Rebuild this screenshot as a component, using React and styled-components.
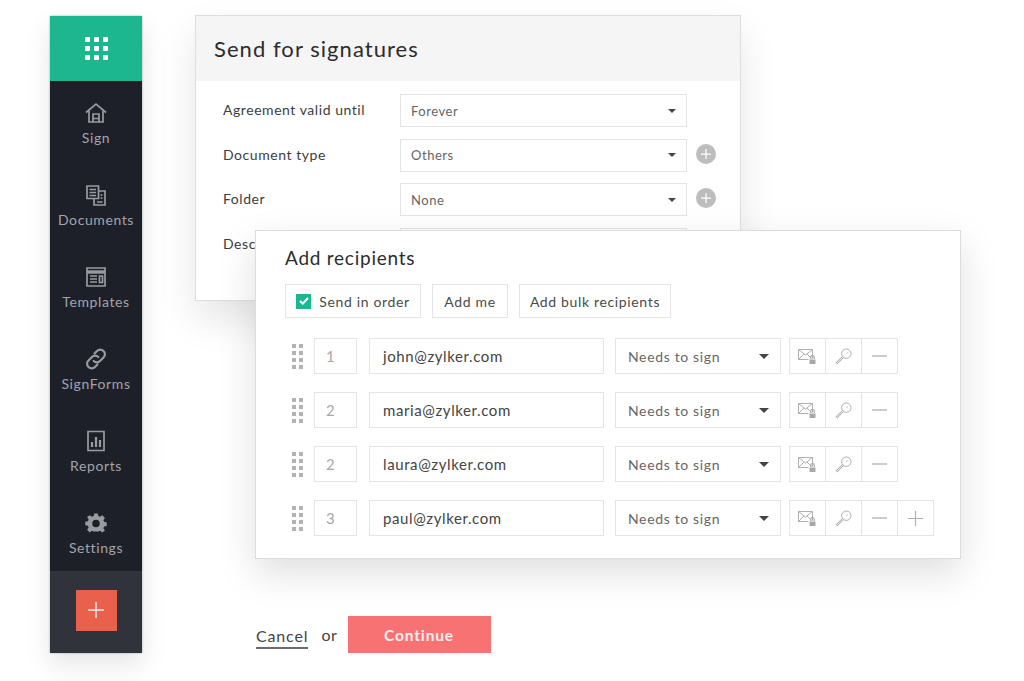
import React from "react";
import styled, { createGlobalStyle } from "styled-components";

const GlobalStyle = createGlobalStyle`
  html, body {
    margin: 0;
    background: #fff;
    font-family: "Lato", "Open Sans", sans-serif;
    overflow: hidden;
  }
`;

const Page = styled.div`
  display: flex;
  align-items: flex-start;
  width: 1024px;
  height: 681px;
  padding: 15px 0 0 50px;
  box-sizing: border-box;
`;

const Sidebar = styled.nav`
  display: flex;
  flex-direction: column;
  flex: none;
  width: 92px;
  height: 637px;
  margin-top: 1px;
  background: #1e2029;
  box-shadow: 0 0 2px #a9aaab, 0 12px 26px rgba(0, 0, 0, 0.1);
`;

const Brand = styled.div`
  display: flex;
  align-items: center;
  justify-content: center;
  flex: none;
  height: 65px;
  background: #1cb78f;
`;

const Dots = styled.div`
  display: grid;
  grid-template-columns: repeat(3, 5px);
  grid-auto-rows: 5px;
  gap: 4px;
  span {
    background: #fff;
    border-radius: 1px;
  }
`;

const NavList = styled.div`
  display: flex;
  flex-direction: column;
  flex: 1;
  gap: 37px;
  padding-top: 20px;
`;

const NavItem = styled.a`
  display: flex;
  flex-direction: column;
  align-items: center;
  color: #a3a4a9;
  font-size: 14px;
  line-height: 17px;
  letter-spacing: 0.6px;
  svg {
    width: 24px;
    height: 24px;
    margin-bottom: 4px;
  }
`;

const AddPanel = styled.div`
  display: flex;
  align-items: center;
  justify-content: center;
  flex: none;
  box-sizing: border-box;
  height: 82px;
  padding-bottom: 4px;
  background: #30343a;
`;

const AddButton = styled.button`
  display: flex;
  align-items: center;
  justify-content: center;
  width: 41px;
  height: 41px;
  padding: 0;
  border: 0;
  background: #e9604c;
`;

const Main = styled.main`
  display: flex;
  flex-direction: column;
  margin-left: 53px;
`;

const SignCard = styled.section`
  width: 544px;
  height: 284px;
  background: #fff;
  border: 1px solid #dedede;
  box-shadow: 0 18px 36px rgba(0, 0, 0, 0.1);
`;

const SignHeader = styled.h1`
  margin: 0;
  height: 65px;
  padding-left: 18px;
  background: #f5f5f5;
  font-size: 22px;
  font-weight: 400;
  line-height: 65px;
  letter-spacing: 1.05px;
  color: #2c2c2c;
`;

const FieldList = styled.div`
  display: flex;
  flex-direction: column;
  gap: 11.5px;
  padding: 13px 0 0 27px;
`;

const Field = styled.div`
  display: flex;
  align-items: center;
  height: 33px;
`;

const FieldLabel = styled.label`
  width: 177px;
  margin-top: -2px;
  font-size: 14px;
  letter-spacing: 0.55px;
  color: #3d3d3d;
`;

const Select = styled.div`
  display: flex;
  align-items: center;
  justify-content: space-between;
  box-sizing: border-box;
  width: ${(p) => p.$width}px;
  height: ${(p) => p.$height}px;
  padding: 0 ${(p) => p.$caretGap}px 0 ${(p) => p.$pad}px;
  flex: none;
  border: 1px solid #e4e4e4;
  background: #fff;
  font-size: ${(p) => p.$size}px;
  letter-spacing: ${(p) => p.$spacing}px;
  color: #666;
  &::after {
    content: "";
    border-top: ${(p) => p.$caret}px solid #444;
    border-left: ${(p) => p.$caret}px solid transparent;
    border-right: ${(p) => p.$caret}px solid transparent;
  }
`;

const RoundAdd = styled.span`
  display: flex;
  align-items: center;
  justify-content: center;
  width: 20px;
  height: 20px;
  margin: -3px 0 0 9px;
  border-radius: 50%;
  background: #bdbdbd;
`;

const RecipientsCard = styled.section`
  position: relative;
  box-sizing: border-box;
  width: 706px;
  height: 329px;
  margin: -71px 0 0 60px;
  padding: 14px 0 0 29px;
  background: #fff;
  border: 1px solid #dcdcdc;
  box-shadow: 0 14px 36px rgba(0, 0, 0, 0.13);
`;

const RecipientsTitle = styled.h2`
  margin: 0 0 14px;
  font-size: 19px;
  font-weight: 400;
  line-height: 25px;
  letter-spacing: 0.75px;
  color: #2c2c2c;
`;

const Toolbar = styled.div`
  display: flex;
  gap: 11px;
  margin-bottom: 20px;
`;

const ToolButton = styled.div`
  display: flex;
  align-items: center;
  justify-content: center;
  gap: 8px;
  box-sizing: border-box;
  width: ${(p) => p.$width}px;
  height: 34px;
  border: 1px solid #e4e4e4;
  font-size: 14px;
  letter-spacing: 0.65px;
  color: #4a4a4a;
`;

const Check = styled.span`
  display: flex;
  align-items: center;
  justify-content: center;
  width: 15px;
  height: 15px;
  background: #1cb78f;
`;

const RowList = styled.div`
  display: flex;
  flex-direction: column;
  gap: 18px;
`;

const Row = styled.div`
  display: flex;
  align-items: center;
  height: 36px;
`;

const Grip = styled.div`
  display: grid;
  grid-template-columns: repeat(2, 4px);
  grid-auto-rows: 4px;
  gap: 3px;
  margin: 0 11px 0 7px;
  span {
    background: #b3b3b3;
  }
`;

const NumberBox = styled.div`
  display: flex;
  align-items: center;
  box-sizing: border-box;
  width: 43px;
  height: 36px;
  padding-left: 11px;
  border: 1px solid #e4e4e4;
  font-size: 15px;
  color: #a8a8a8;
`;

const EmailBox = styled.div`
  display: flex;
  align-items: center;
  box-sizing: border-box;
  width: 235px;
  height: 36px;
  margin: 0 11px 0 12px;
  padding-left: 13px;
  border: 1px solid #e4e4e4;
  font-size: 15px;
  letter-spacing: 0.6px;
  color: #444;
`;

const Actions = styled.div`
  display: flex;
  margin-left: 9px;
`;

const ActionCell = styled.div`
  display: flex;
  align-items: center;
  justify-content: center;
  box-sizing: border-box;
  width: 37px;
  height: 36px;
  margin-left: -1px;
  border: 1px solid #e4e4e4;
`;

const Footer = styled.div`
  display: flex;
  align-items: center;
  margin: 57px 0 0 61px;
  font-size: 16px;
  letter-spacing: 0.6px;
  color: #444;
`;

const CancelLink = styled.a`
  margin: 4px 13px 0 0;
  padding: 2px 0;
  border-bottom: 2px solid #6c6c6c;
  letter-spacing: 0.85px;
`;

const ContinueButton = styled.button`
  width: 143px;
  height: 37px;
  margin-left: 10px;
  border: 0;
  background: #f77373;
  color: #fdeeee;
  font-family: inherit;
  font-size: 15.5px;
  font-weight: 700;
  letter-spacing: 0.85px;
`;

const stroke = { fill: "none", stroke: "#9a9ba0", strokeWidth: 1.7 };

const HomeIcon = () => (
  <svg viewBox="0 0 24 24" {...stroke}>
    <path d="M2 11.5 12 3l10 8.5" />
    <path d="M5 9.5V21h14V9.5" />
    <path d="M9 21v-8h6v8M9 17.5h6" />
  </svg>
);

const DocsIcon = () => (
  <svg viewBox="0 0 24 24" {...stroke}>
    <path d="M14.5 15.5H3V3h11.5v12.5Z" />
    <path d="M14.5 8H21v14H10v-6.5" />
    <path d="M5.5 6.5h6.5M5.5 9.5h6.5M5.5 12.5h6.5M16.5 12h2M16.5 15h2M13 19h5.5" />
  </svg>
);

const TemplateIcon = () => (
  <svg viewBox="0 0 24 24" {...stroke}>
    <path d="M3 3h18v18H3z" />
    <path d="M3 7h18" strokeWidth="3.4" />
    <path d="M6 11h7M6 14h7M6 17h7M15.5 11h3v6.5h-3z" />
  </svg>
);

const LinkIcon = () => (
  <svg viewBox="0 0 24 24" {...stroke} strokeWidth="2.2" strokeLinecap="round">
    <path d="M10.5 6.5 13 4a4.4 4.4 0 0 1 6.5 0 4.4 4.4 0 0 1 0 6.5L16 14a4.4 4.4 0 0 1-6.3 0" />
    <path d="M13.5 17.5 11 20a4.4 4.4 0 0 1-6.5 0 4.4 4.4 0 0 1 0-6.5L8 10a4.4 4.4 0 0 1 6.3 0" />
  </svg>
);

const ReportIcon = () => (
  <svg viewBox="0 0 24 24" {...stroke}>
    <path d="M4 2.5h16v19H4z" />
    <path d="M8 18v-5M12 18V8M16 18v-7" strokeWidth="2.2" />
  </svg>
);

const GearIcon = () => (
  <svg viewBox="0 0 24 24">
    <path
      fill="#9a9ba0"
      fillRule="evenodd"
      d="M10 2h4l.6 2.9 1.9.8L19 4l2.9 2.9-1.7 2.5.8 1.9 2.9.6v4l-2.9.6-.8 1.9 1.7 2.5L19 23l-2.5-1.7-1.9.8-.6 0h-4l-.6 0-1.9-.8L5 23l-2.9-2.9 1.7-2.5-.8-1.9L.1 15.1v-4L3 10.5l.8-1.9L2.1 6 5 4l2.5 1.7 1.9-.8L10 2Zm2 7a4.2 4.2 0 1 0 0 8.4A4.2 4.2 0 0 0 12 9Z"
      transform="translate(1.2 .7) scale(.9)"
    />
  </svg>
);

const PlusGlyph = ({ size, color, width }) => (
  <svg width={size} height={size} viewBox="0 0 16 16" fill="none" stroke={color} strokeWidth={width}>
    <path d="M8 0v16M0 8h16" />
  </svg>
);

const MailLockIcon = () => (
  <svg width="19" height="17" viewBox="0 0 19 17" fill="none" stroke="#b0b0b0" strokeWidth="1">
    <path d="M.5 1.5h14v10H.5z" />
    <path d="m.5 1.5 7 5.5 7-5.5M.5 11.5 6 6M14.5 11.5 9 6" />
    <path d="M11 11h7v5.5h-7z" fill="#a8a8a8" stroke="#fff" />
    <path d="M12.8 11V9.2a1.7 1.7 0 0 1 3.4 0V11" stroke="#a8a8a8" strokeWidth="1.2" />
  </svg>
);

const KeyIcon = () => (
  <svg width="17" height="17" viewBox="0 0 17 17" fill="none" stroke="#b0b0b0" strokeWidth="1">
    <circle cx="11.3" cy="5.7" r="4.7" />
    <path d="M8 9 1.3 15.7" strokeWidth="2.4" />
    <path d="M8 9 1.3 15.7" stroke="#fff" strokeWidth=".7" />
    <path d="M11.5 5.8 13 4.3" />
  </svg>
);

const MinusIcon = () => (
  <svg width="15" height="2" viewBox="0 0 15 2">
    <path d="M0 1h15" stroke="#b0b0b0" strokeWidth="1.3" />
  </svg>
);

const navItems = [
  { label: "Sign", Icon: HomeIcon },
  { label: "Documents", Icon: DocsIcon },
  { label: "Templates", Icon: TemplateIcon },
  { label: "SignForms", Icon: LinkIcon },
  { label: "Reports", Icon: ReportIcon },
  { label: "Settings", Icon: GearIcon },
];

const fields = [
  { label: "Agreement valid until", value: "Forever" },
  { label: "Document type", value: "Others", add: true },
  { label: "Folder", value: "None", add: true },
  { label: "Description", value: "" },
];

const recipients = [
  { order: 1, email: "john@zylker.com" },
  { order: 2, email: "maria@zylker.com" },
  { order: 2, email: "laura@zylker.com" },
  { order: 3, email: "paul@zylker.com", extra: true },
];

const Recipient = ({ order, email, extra }) => (
  <Row>
    <Grip>
      {Array.from({ length: 8 }, (_, i) => (
        <span key={i} />
      ))}
    </Grip>
    <NumberBox>{order}</NumberBox>
    <EmailBox>{email}</EmailBox>
    <Select $width={166} $height={36} $pad={12} $caretGap={11} $size={14} $spacing={0.65} $caret={5}>
      Needs to sign
    </Select>
    <Actions>
      <ActionCell>
        <MailLockIcon />
      </ActionCell>
      <ActionCell>
        <KeyIcon />
      </ActionCell>
      <ActionCell>
        <MinusIcon />
      </ActionCell>
      {extra && (
        <ActionCell>
          <PlusGlyph size={15} color="#b0b0b0" width={1.3} />
        </ActionCell>
      )}
    </Actions>
  </Row>
);

export default function App() {
  return (
    <>
      <GlobalStyle />
      <Page>
        <Sidebar>
          <Brand>
            <Dots>
              {Array.from({ length: 9 }, (_, i) => (
                <span key={i} />
              ))}
            </Dots>
          </Brand>
          <NavList>
            {navItems.map(({ label, Icon }) => (
              <NavItem key={label}>
                <Icon />
                {label}
              </NavItem>
            ))}
          </NavList>
          <AddPanel>
            <AddButton>
              <PlusGlyph size={16} color="#fbe3df" width={1.6} />
            </AddButton>
          </AddPanel>
        </Sidebar>
        <Main>
          <SignCard>
            <SignHeader>Send for signatures</SignHeader>
            <FieldList>
              {fields.map((field) => (
                <Field key={field.label}>
                  <FieldLabel>{field.label}</FieldLabel>
                  <Select $width={287} $height={33} $pad={10} $caretGap={10} $size={13} $spacing={0.55} $caret={4}>
                    {field.value}
                  </Select>
                  {field.add && (
                    <RoundAdd>
                      <PlusGlyph size={10} color="#fff" width={2} />
                    </RoundAdd>
                  )}
                </Field>
              ))}
            </FieldList>
          </SignCard>
          <RecipientsCard>
            <RecipientsTitle>Add recipients</RecipientsTitle>
            <Toolbar>
              <ToolButton $width={136}>
                <Check>
                  <svg width="10" height="8" viewBox="0 0 10 8" fill="none" stroke="#fff" strokeWidth="2">
                    <path d="m1 4 2.8 2.6L9 1" />
                  </svg>
                </Check>
                Send in order
              </ToolButton>
              <ToolButton $width={76}>Add me</ToolButton>
              <ToolButton $width={152}>Add bulk recipients</ToolButton>
            </Toolbar>
            <RowList>
              {recipients.map((r) => (
                <Recipient key={r.email} {...r} />
              ))}
            </RowList>
          </RecipientsCard>
          <Footer>
            <CancelLink>Cancel</CancelLink>
            or
            <ContinueButton>Continue</ContinueButton>
          </Footer>
        </Main>
      </Page>
    </>
  );
}
